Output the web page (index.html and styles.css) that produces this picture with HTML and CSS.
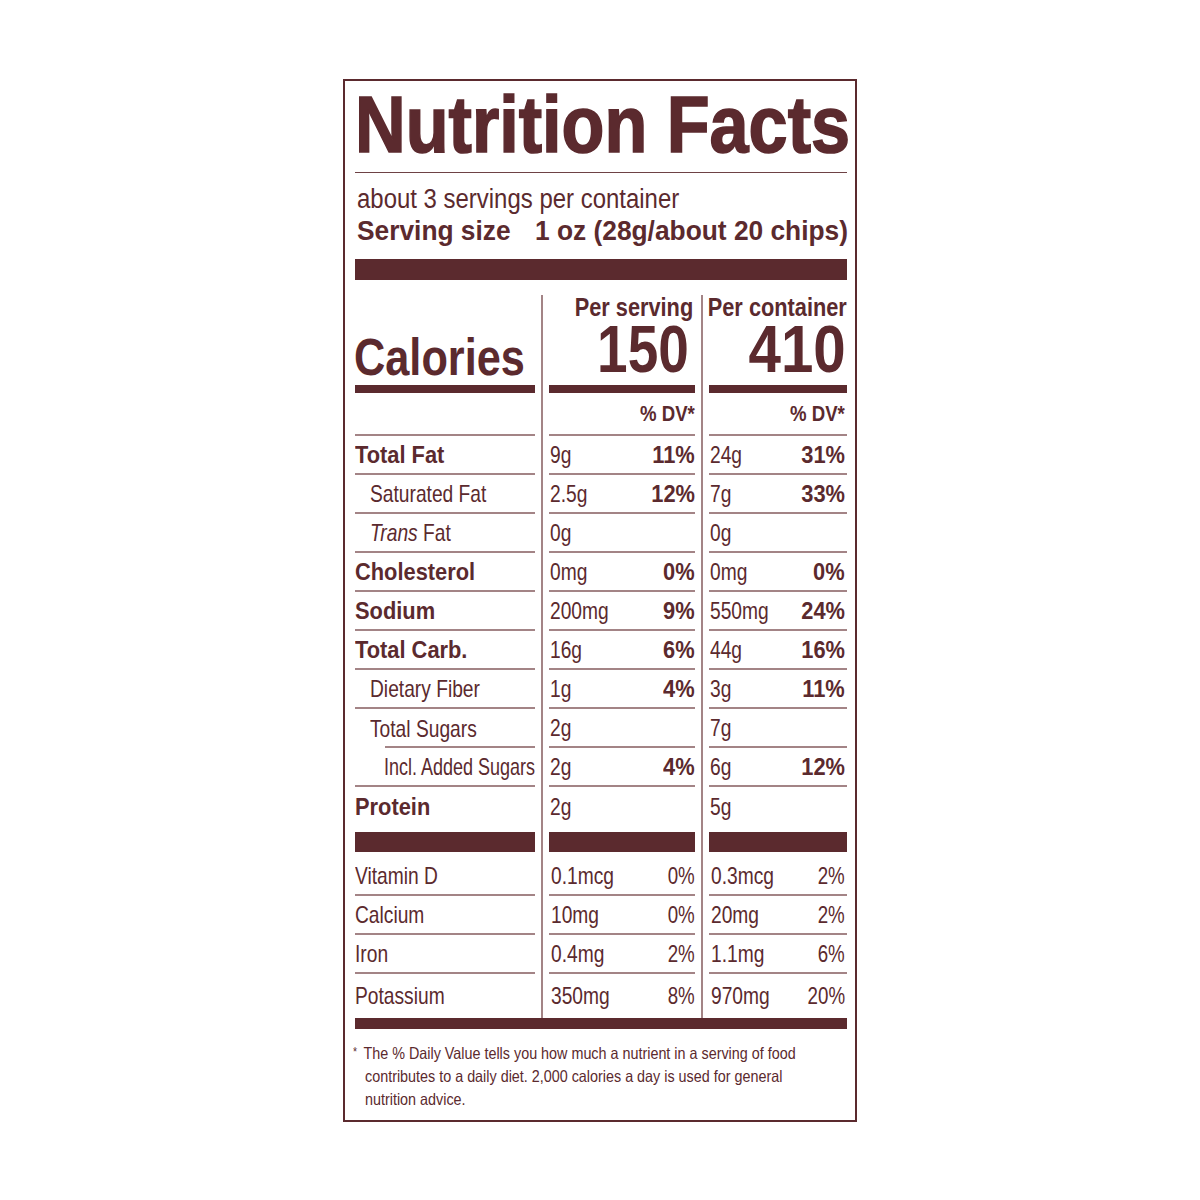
FILE: index.html
```html
<!DOCTYPE html>
<html lang="en">
<head>
  <meta charset="UTF-8"/>
  <meta name="viewport" content="width=device-width, initial-scale=1.0"/>
  <title>Nutrition Facts</title>
  <link rel="stylesheet" href="styles.css">
</head>
<body>

  <!-- Nutrition label panel -->
  <div class="label">
    <h1 class="title"><span>Nutrition Facts</span></h1>
    <p class="servings"><span>about 3 servings per container</span></p>
    <p class="serving-size"><span class="ss-l">Serving size</span><span class="ss-r">1 oz (28g/about 20 chips)</span></p>
    <div class="bar-thick"></div>

    <!-- Three column facts table -->
    <div class="facts">
      <div class="vrule vrule-a"></div>
      <div class="vrule vrule-b"></div>

      <div class="cal-label"><span>Calories</span></div>
      <div class="cal-amount"><span class="per">Per serving</span><span class="big">150</span></div>
      <div class="cal-amount cal-c"><span class="per">Per container</span><span class="big">410</span></div>

      <div class="cell dv-head"></div>
      <div class="cell dv-head"><span class="p">% DV*</span></div>
      <div class="cell dv-head col-c"><span class="p">% DV*</span></div>

      <div class="cell name bold"><span>Total Fat</span></div>
      <div class="cell"><span>9g</span><b class="p">11%</b></div>
      <div class="cell col-c"><span>24g</span><b class="p">31%</b></div>

      <div class="cell name sub"><span>Saturated Fat</span></div>
      <div class="cell"><span>2.5g</span><b class="p">12%</b></div>
      <div class="cell col-c"><span>7g</span><b class="p">33%</b></div>

      <div class="cell name sub"><span><i>Trans</i> Fat</span></div>
      <div class="cell"><span>0g</span></div>
      <div class="cell col-c"><span>0g</span></div>

      <div class="cell name bold"><span>Cholesterol</span></div>
      <div class="cell"><span>0mg</span><b class="p">0%</b></div>
      <div class="cell col-c"><span>0mg</span><b class="p">0%</b></div>

      <div class="cell name bold"><span>Sodium</span></div>
      <div class="cell"><span>200mg</span><b class="p">9%</b></div>
      <div class="cell col-c"><span>550mg</span><b class="p">24%</b></div>

      <div class="cell name bold"><span>Total Carb.</span></div>
      <div class="cell"><span>16g</span><b class="p">6%</b></div>
      <div class="cell col-c"><span>44g</span><b class="p">16%</b></div>

      <div class="cell name sub"><span>Dietary Fiber</span></div>
      <div class="cell"><span>1g</span><b class="p">4%</b></div>
      <div class="cell col-c"><span>3g</span><b class="p">11%</b></div>

      <div class="cell name sub short-rule"><span>Total Sugars</span></div>
      <div class="cell"><span>2g</span></div>
      <div class="cell col-c"><span>7g</span></div>

      <div class="cell name sub2"><span>Incl. Added Sugars</span></div>
      <div class="cell"><span>2g</span><b class="p">4%</b></div>
      <div class="cell col-c"><span>6g</span><b class="p">12%</b></div>

      <div class="cell name bold no-rule"><span>Protein</span></div>
      <div class="cell no-rule"><span>2g</span></div>
      <div class="cell col-c no-rule"><span>5g</span></div>

      <div class="bar-mid"></div>
      <div class="bar-mid"></div>
      <div class="bar-mid"></div>

      <div class="cell name"><span>Vitamin D</span></div>
      <div class="cell vit"><span>0.1mcg</span><span class="p">0%</span></div>
      <div class="cell vit col-c"><span>0.3mcg</span><span class="p">2%</span></div>

      <div class="cell name"><span>Calcium</span></div>
      <div class="cell vit"><span>10mg</span><span class="p">0%</span></div>
      <div class="cell vit col-c"><span>20mg</span><span class="p">2%</span></div>

      <div class="cell name"><span>Iron</span></div>
      <div class="cell vit"><span>0.4mg</span><span class="p">2%</span></div>
      <div class="cell vit col-c"><span>1.1mg</span><span class="p">6%</span></div>

      <div class="cell name last"><span>Potassium</span></div>
      <div class="cell vit last"><span>350mg</span><span class="p">8%</span></div>
      <div class="cell vit col-c last"><span>970mg</span><span class="p">20%</span></div>
    </div>

    <div class="bar-bottom"></div>

    <p class="footnote">
      <span class="fl first"><span class="ast">*</span>The % Daily Value tells you how much a nutrient in a serving of food</span>
      <span class="fl">contributes to a daily diet. 2,000 calories a day is used for general</span>
      <span class="fl">nutrition advice.</span>
    </p>
  </div>

</body>
</html>
```

FILE: styles.css
```css
/**********************************************
 *  Page
 *  (no condensed face is installed, so text is
 *   squeezed with scaleX to get the narrow look)
 **********************************************/
body {
  margin: 0;
  padding: 0;
  background-color: #fff;
  color: #5b2a2e;
  font-family: "Liberation Sans", Arial, sans-serif;
}

h1, p {
  margin: 0;
  padding: 0;
}

/**********************************************
 *  Label box
 **********************************************/
.label {
  box-sizing: border-box;
  width: 514px;
  margin: 79px auto 0;
  padding: 0 8px 9px 10px;
  border: 2px solid #5b2a2e;
}

.title {
  margin-top: 4px;
  padding-bottom: 7px;
  border-bottom: 1px solid #6e4245;
  font-size: 80px;
  line-height: 80px;
  font-weight: bold;
  white-space: nowrap;
}

.title span {
  display: inline-block;
  transform: scaleX(.877);
  transform-origin: left center;
  -webkit-text-stroke: 1.6px #5b2a2e;
}

.servings {
  margin-top: 10px;
  padding-left: 2px;
  font-size: 27px;
  line-height: 32px;
  white-space: nowrap;
}

.servings span {
  display: inline-block;
  transform: scaleX(.887);
  transform-origin: left center;
}

.serving-size {
  display: flex;
  padding-left: 2px;
  font-size: 28px;
  line-height: 32px;
  font-weight: bold;
  white-space: nowrap;
}

.serving-size span {
  display: inline-block;
  flex-shrink: 0;
  transform: scaleX(.94);
  transform-origin: left center;
}

.serving-size .ss-r {
  margin-left: 15px;
}

.bar-thick {
  height: 21px;
  margin-top: 12px;
  background-color: #5b2a2e;
}

/**********************************************
 *  Facts table
 **********************************************/
.facts {
  display: grid;
  grid-template-columns: 180px 14px 146px 14px 138px;
  margin-top: 15px;
}

.vrule {
  grid-row: 1 / span 17;
  justify-self: center;
  width: 2px;
  background-color: #a38486;
}

.vrule-a { grid-column: 2; }
.vrule-b { grid-column: 4; }

.cal-label {
  display: flex;
  align-items: flex-end;
  padding-bottom: 2px;
  border-bottom: 8px solid #5b2a2e;
  font-size: 52px;
  line-height: 52px;
  font-weight: bold;
  white-space: nowrap;
}

.cal-label span {
  transform: scaleX(.833);
  transform-origin: left center;
  margin-left: -1px;
}

.cal-amount {
  display: flex;
  flex-direction: column;
  align-items: flex-end;
  justify-content: flex-end;
  padding-bottom: 6px;
  border-bottom: 8px solid #5b2a2e;
  font-weight: bold;
  white-space: nowrap;
}

.cal-amount .per {
  font-size: 25px;
  line-height: 24px;
  margin-right: 2px;
  transform: scaleX(.87);
  transform-origin: right center;
}

.cal-amount .big {
  font-size: 67px;
  line-height: 60px;
  margin-right: 6px;
  transform: scaleX(.82);
  transform-origin: right center;
}

.cal-c .per { margin-right: 0; }
.cal-c .big { margin-right: 1px; transform: scaleX(.87); }

.cell {
  box-sizing: border-box;
  height: 39px;
  display: flex;
  align-items: center;
  justify-content: space-between;
  border-bottom: 2px solid #a38486;
  font-size: 24px;
  white-space: nowrap;
}

.cell > * {
  display: inline-block;
  transform: scaleX(.8);
  transform-origin: left center;
}

.cell > span:first-child { margin-left: 1px; }

.cell .p {
  transform-origin: right center;
}

.cell b.p,
.name.bold > span {
  transform: scaleX(.91);
}

.col-c { padding-right: 2px; }

.dv-head {
  height: 43px;
  justify-content: flex-end;
  font-size: 22px;
  font-weight: bold;
}

.dv-head .p {
  transform: scaleX(.846);
}

.name > span:first-child { margin-left: 0; }
.name.bold { font-weight: bold; }
.name.sub { padding-left: 15px; }
.name.sub2 { padding-left: 29px; }
.name.sub2 > span { transform: scaleX(.75); }

.short-rule {
  border-bottom: none;
  background: linear-gradient(#a38486, #a38486) no-repeat 30px 100% / calc(100% - 30px) 2px;
}

.no-rule { border-bottom: none; }

.last {
  height: 44px;
  border-bottom: none;
}

.vit > span:first-child { margin-left: 2px; }
.vit .p { transform: scaleX(.78); }

.bar-mid {
  height: 20px;
  margin: 6px 0 5px;
  background-color: #5b2a2e;
}

.bar-bottom {
  height: 11px;
  background-color: #5b2a2e;
}

/**********************************************
 *  Footnote
 **********************************************/
.footnote {
  margin-top: 12px;
  padding-left: 10px;
  font-size: 16.5px;
  line-height: 23px;
}

.footnote .fl {
  display: block;
  white-space: nowrap;
  transform: scaleX(.87);
  transform-origin: left center;
}

.footnote .fl.first {
  margin-left: -12px;
}

.footnote .ast {
  display: inline-block;
  width: 12px;
  font-size: 12px;
  vertical-align: 3px;
}
```
